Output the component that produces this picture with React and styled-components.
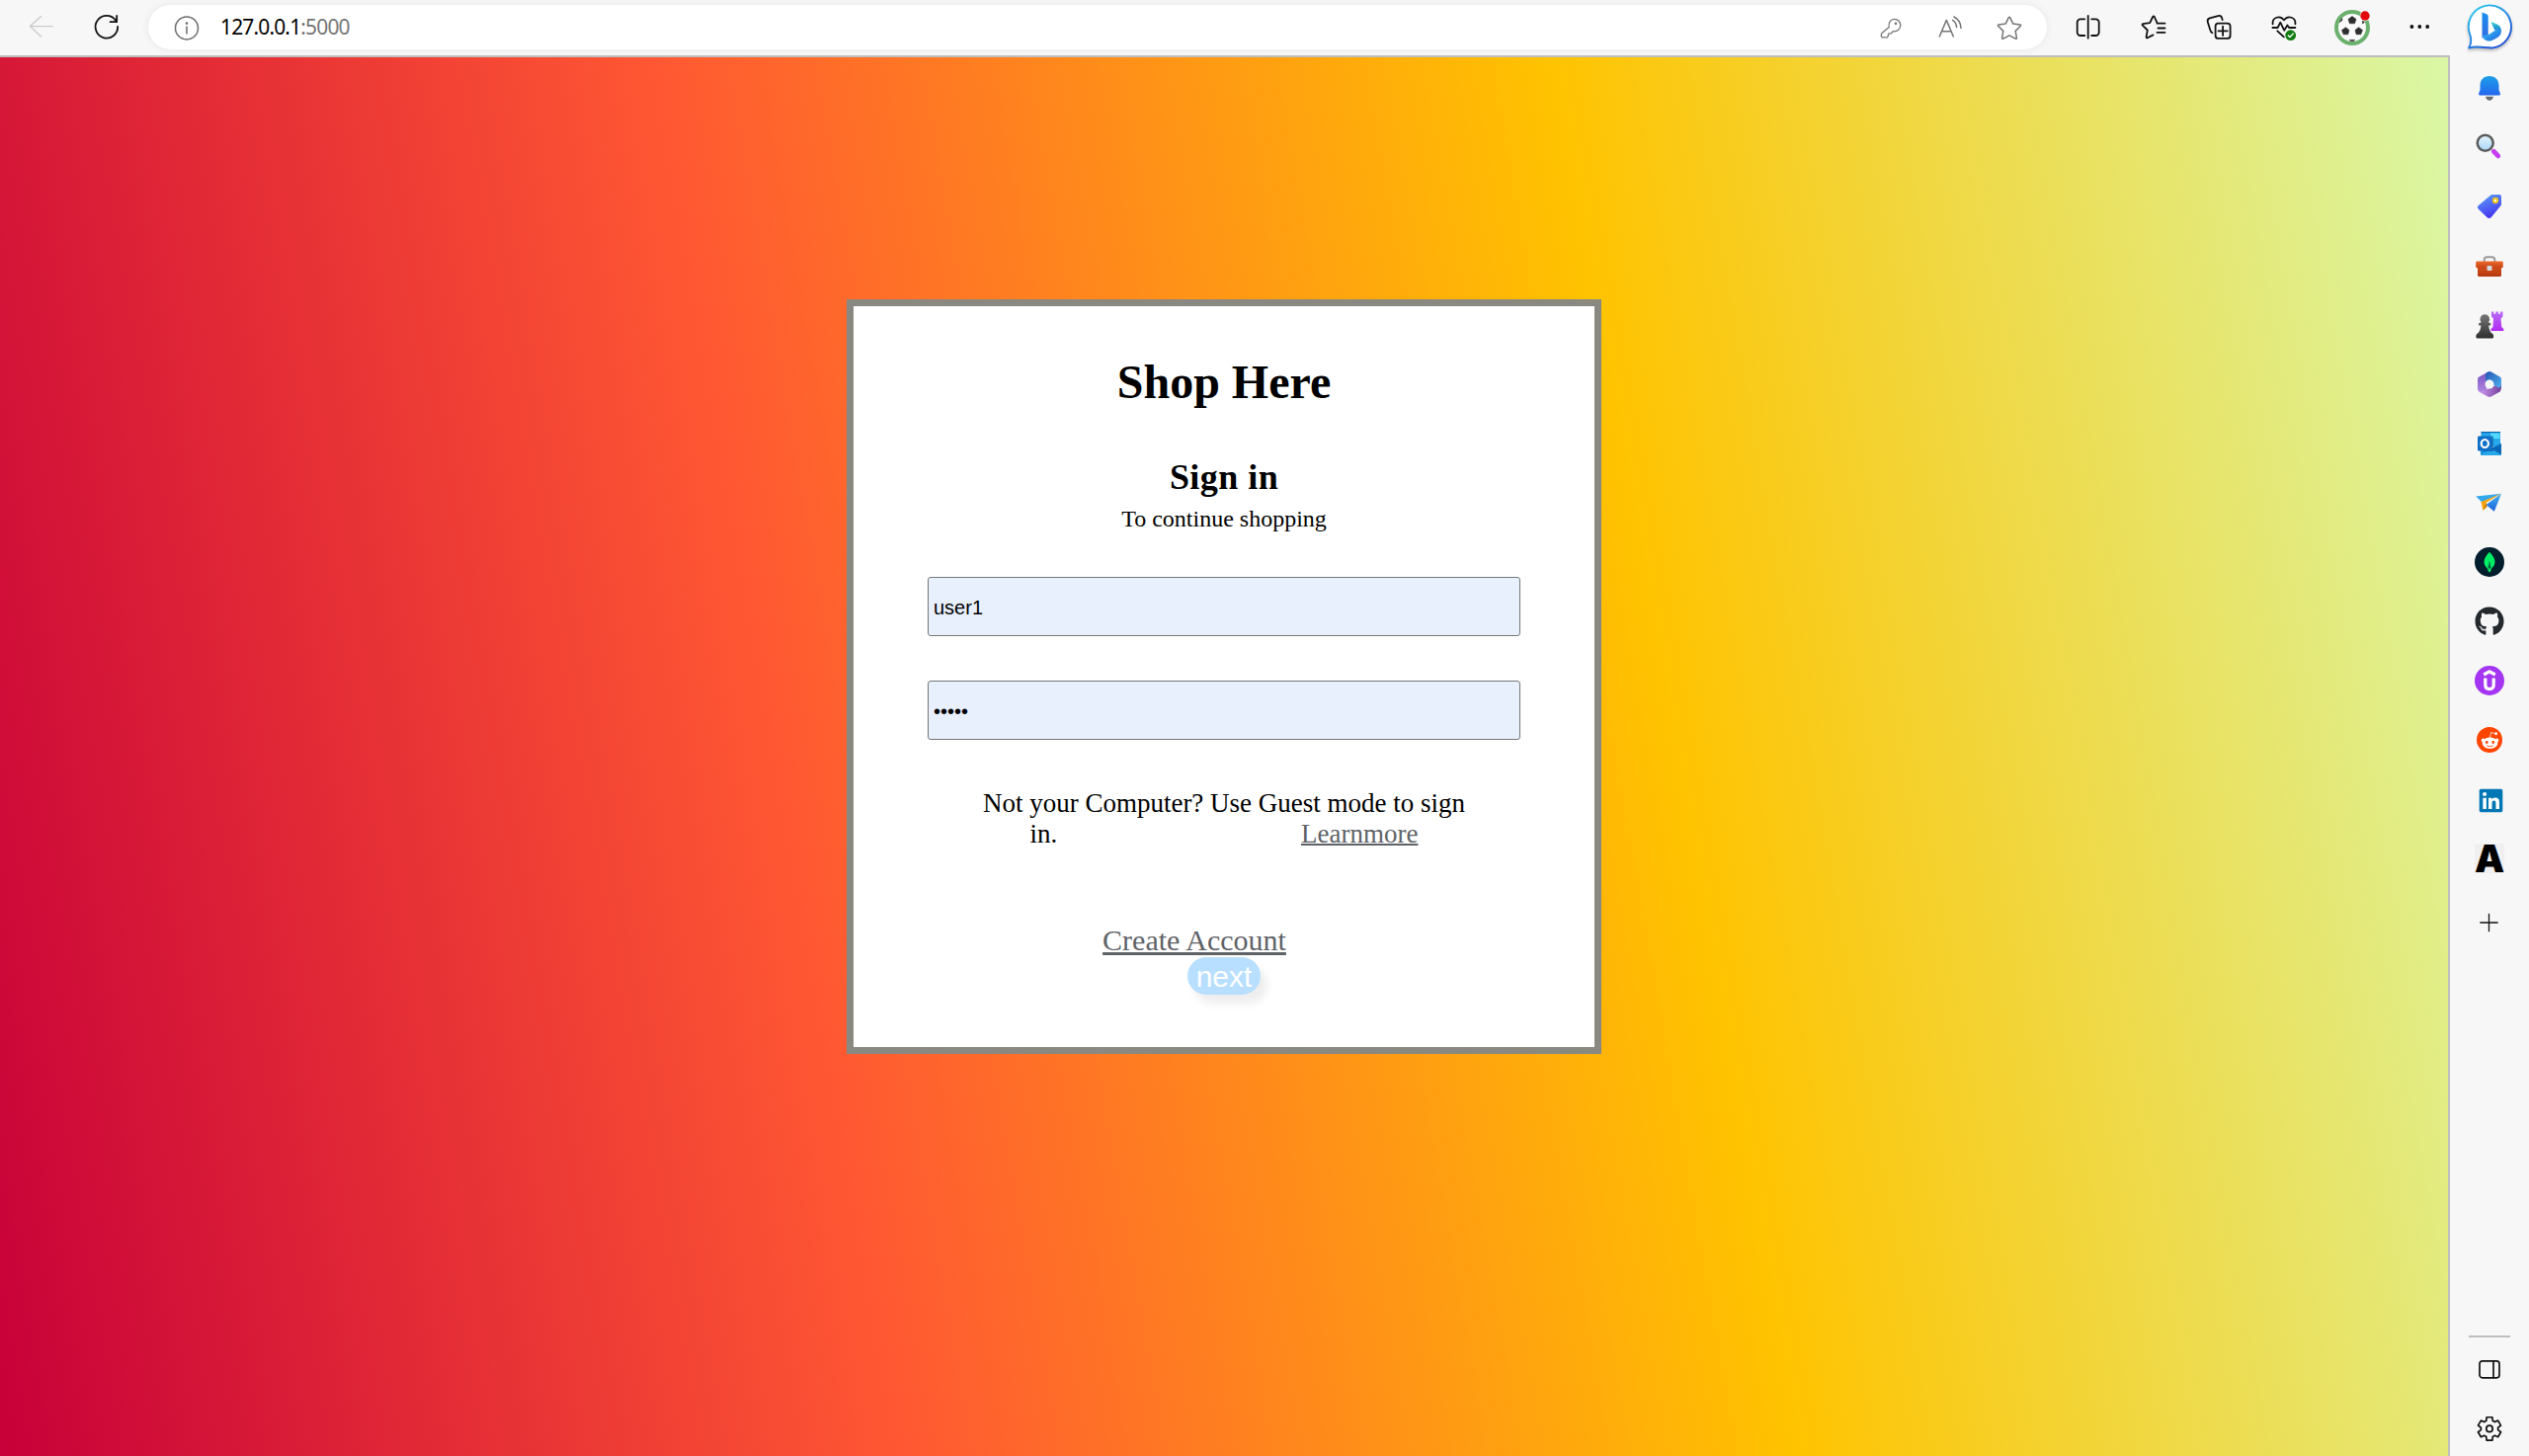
import React from "react";
import styled, { createGlobalStyle } from "styled-components";
import { FaGithub, FaRedditAlien, FaLinkedin } from "react-icons/fa";

const GlobalStyle = createGlobalStyle`
  * { box-sizing: border-box; }
  html, body { margin: 0; padding: 0; background: #f7f7f7; }
  body { overflow: hidden; }
`;

const Browser = styled.div`
  display: flex;
  flex-direction: column;
  width: 2560px;
  height: 1474px;
  background: #f7f7f7;
`;

const Toolbar = styled.header`
  display: flex;
  align-items: center;
  height: 56px;
  padding-left: 9px;
  flex: none;
`;

const Slot = styled.span`
  display: flex;
  align-items: center;
  justify-content: center;
  flex: none;
  width: ${(p) => p.$w || 60}px;
  height: ${(p) => p.$h || 54}px;
  color: ${(p) => p.$color || "#111"};
  svg { display: block; flex: none; }
`;

const ToolSlot = styled(Slot)`
  margin-bottom: 2px;
`;

const AddressBar = styled.div`
  display: flex;
  align-items: center;
  width: 1922px;
  height: 45px;
  margin: 0 9px 1px;
  padding-right: 8px;
  border-radius: 23px;
  background: #fff;
  box-shadow: 0 0 8px rgba(0, 0, 0, 0.07);
`;

const Url = styled.span`
  flex: 1;
  margin-left: -5px;
  font: 400 21px/45px "Noto Sans", "Open Sans", sans-serif;
  letter-spacing: -0.85px;
  color: #000;
`;

const Port = styled.span`
  color: #767676;
`;

const Body = styled.div`
  display: flex;
  flex: 1;
  min-height: 0;
`;

const Page = styled.main`
  display: flex;
  justify-content: center;
  align-items: flex-start;
  width: 2480px;
  padding-top: 245px;
  border-top: 2px solid #bebebe;
  border-right: 2px solid #bebebe;
  background: linear-gradient(80deg, #c70039, #ff5733, #ffc300, #daf7a6) padding-box;
`;

const Card = styled.form`
  display: flex;
  flex-direction: column;
  align-items: center;
  width: 764px;
  height: 764px;
  padding-top: 49px;
  border: 7px solid #8a8981;
  background: #fff;
  font-family: "Liberation Serif", "Times New Roman", serif;
  color: #000;
`;

const Title = styled.h1`
  margin: 0;
  font-size: 48px;
  line-height: 56px;
`;

const Subtitle = styled.h2`
  margin: 47px 0 0;
  font-size: 36px;
  line-height: 42px;
  letter-spacing: 0.45px;
`;

const Hint = styled.p`
  margin: 7px 0 0;
  font-size: 24px;
  line-height: 28px;
`;

const Field = styled.input`
  width: 600px;
  height: 60px;
  margin: 45px 0 0;
  padding: 4px 4px 1px 5px;
  border: 1px solid #767676;
  border-radius: 3px;
  outline: none;
  background: #e8f0fe;
  font: 20px "Liberation Sans", Arial, sans-serif;
  color: #000;
`;

const Notice = styled.p`
  display: flex;
  flex-direction: column;
  align-items: center;
  margin: 49px 0 0;
  font-size: 27px;
  line-height: 31px;
`;

const NoticeEnd = styled.span`
  display: flex;
  justify-content: space-between;
  width: 393px;
`;

const Link = styled.a`
  color: #5f6368;
  text-decoration: underline;
  text-decoration-thickness: 2px;
`;

const CreateLink = styled(Link)`
  margin: 75px 60px 0 0;
  font-size: 30px;
  line-height: 34px;
  text-decoration-thickness: 3px;
  text-underline-offset: 2px;
`;

const NextButton = styled.button`
  width: 74px;
  height: 38px;
  margin: 0;
  padding: 1px 0 0;
  border: 0;
  border-radius: 19px;
  background: #b8dfff;
  box-shadow: 7px 9px 9px rgba(0, 0, 0, 0.07);
  font: 30px/36px "Liberation Sans", Arial, sans-serif;
  color: #fff;
`;

const Sidebar = styled.aside`
  display: flex;
  flex-direction: column;
  align-items: center;
  width: 80px;
  padding-top: 3px;
`;

const Spacer = styled.div`
  flex: 1;
`;

const SideFooter = styled.div`
  display: flex;
  flex-direction: column;
  align-items: center;
  flex: none;
`;

const Divider = styled.div`
  width: 42px;
  height: 2px;
  margin-bottom: 2px;
  background: #bebebe;
`;

const LetterTile = styled.span`
  display: flex;
  align-items: center;
  justify-content: center;
  width: 30px;
  height: 30px;
  background: #f0f0f0;
  font: 900 38px/30px Inter, "Open Sans", sans-serif;
  color: #000;
`;

const Line = ({ children, w = 1.4, ...rest }) => (
  <svg width="30" height="30" viewBox="0 0 30 30" fill="none" stroke="currentColor" strokeWidth={w} strokeLinecap="round" strokeLinejoin="round" {...rest}>
    {children}
  </svg>
);

const Art = ({ children, s = 30 }) => (
  <svg width={s} height={s} viewBox={`${-s / 2} ${-s / 2} ${s} ${s}`}>{children}</svg>
);

const Grad = ({ id, from, to, x2 = 0, y2 = 1 }) => (
  <linearGradient id={id} x1="0" y1="0" x2={x2} y2={y2}>
    <stop offset="0" stopColor={from} />
    <stop offset="1" stopColor={to} />
  </linearGradient>
);

const BackIcon = () => (
  <Line><path d="M26.3 14.6H3.6M14.5 4.5L3.4 14.6 14.5 24.9" /></Line>
);
const RefreshIcon = () => (
  <Line w={1.8}><path d="M26.2 14.8A11.3 11.3 0 1 1 24.2 8.800M25.200 4v6.200h-6.600" /></Line>
);
const InfoIcon = () => (
  <Line w={1.5}>
    <circle cx="15" cy="15.4" r="11.5" />
    <path d="M15 13.9v7" />
    <circle cx="15" cy="10.6" r="0.6" fill="currentColor" />
  </Line>
);
const KeyIcon = () => (
  <Line w={1.3}>
    <path d="M13.2 14.6C12 10 15 6.4 18.6 6.4c3.6 0 6.2 2.8 6.2 6.2 0 3.8-3.4 6.8-7.6 6.1l-1.800 2.200h-2.200l-.8.9v1.500l-1.200 1.500H6.400c-.6 0-1-.4-1-1v-2c0-.5.2-.9.5-1.200z" />
    <circle cx="20" cy="10.8" r="0.7" fill="currentColor" />
  </Line>
);
const ReadAloudIcon = () => (
  <Line w={1.5}>
    <path d="M4.300 24L11.300 7.400 18.300 24M6.600 18.700h9.400M17.600 7.400c2.300 1.500 3.800 4 4 7.200M18.900 4c4.300 2.300 7 6.400 7.100 11.400" />
  </Line>
);
const StarIcon = () => (
  <Line w={1.5}>
    <path d="M14.2 4.9q.8-1.2 1.6 0l3 6.2 6.9 1q1.4.3.5 1.4l-5 4.9 1.2 6.9q.1 1.4-1.2.9L15 22.9l-6.2 3.3q-1.3.5-1.2-.9l1.2-6.9-5-4.9q-.9-1.1.5-1.4l6.9-1z" />
  </Line>
);
const SplitIcon = () => (
  <Line w={1.8}>
    <path d="M11.2 24H7a3.3 3.3 0 0 1-3.3-3.3V10.600A3.3 3.3 0 0 1 7 7.300h4.200M18.200 7.300h4.200a3.300 3.300 0 0 1 3.300 3.300v10.100a3.300 3.300 0 0 1-3.300 3.300h-4.200M14.700 4v22.700" />
  </Line>
);
const FavoritesIcon = () => (
  <Line w={1.8}>
    <path d="M18.3 10.600L15.800 5q-.8-1.300-1.600 0l-3 6.200-6.900 1q-1.300.3-.5 1.400l5 4.900-1.200 6.900q0 1.400 1.300.9L14.500 23.400M18.500 11.700H26.500M19.500 16.500h7M18.500 20.800h8" />
  </Line>
);
const CollectionsIcon = () => (
  <Line w={1.8}>
    <rect x="11.600" y="11.600" width="15" height="15.300" rx="3" />
    <path d="M19.100 14.700v9.200M14.500 19.300h9.200M8.400 21.200c-1.500-.6-1.900-2-2.300-3.500L3.800 10.200C3.200 8 4 6.900 5.800 6.300l8.500-2.200c2-.5 3.400.4 3.900 2.300l.5 1.700" />
  </Line>
);
const HealthIcon = () => (
  <Line w={1.8}>
    <path d="M3.600 12.400C2.800 5.500 11 2.900 15 8.300 19 2.900 27.200 5.500 26.400 12.400M3.400 16h5.200l2.700-5.300 3.900 8 3.200-5.200 1.700 2.500h6.300M8.300 19.300l6.500 6" />
    <circle cx="21.700" cy="23.700" r="5.400" fill="#107c10" stroke="none" />
    <path d="M19.300 24l1.700 1.600 3.200-3.500" stroke="#fff" strokeWidth="1.400" />
  </Line>
);
const AvatarIcon = () => (
  <Art s={38}>
    <circle r="16" fill="#fafafa" stroke="#6cb06e" strokeWidth="4" />
    <g fill="#2e2e2e" stroke="#2e2e2e" strokeWidth="0.600" strokeLinejoin="round">
      <path d="M0-11.500l4 3-1.500 4.300h-5L-4-8.500zM-6.500-.3l3.500 2.800-1.200 4.300h-4.600L-10.500 2.600zM6.500-.3L3 2.500l1.200 4.300h4.500l1.800-4.300zM-2.600 12.400h5.200l-1 1.200h-3.200zM-12.800-5.500l2.500-4 .3 2zM12.300-5.200l-1.800-2v3z" />
    </g>
    <circle cx="13" cy="-12" r="5.300" fill="#f7f7f7" />
    <circle cx="13" cy="-12" r="4.700" fill="#e30909" />
  </Art>
);
const MoreIcon = () => (
  <Art><g fill="#111"><circle cx="-7.600" r="1.900" /><circle cx=".300" r="1.900" /><circle cx="8.200" r="1.900" /></g></Art>
);
const BingIcon = () => (
  <Art s={54}>
    <defs>
      <Grad id="bubble" from="#2bd4ef" to="#1f4fd8" x2={0.7} />
      <Grad id="bStem" from="#1b8ff0" to="#2f6be0" />
      <Grad id="bBowl" from="#35d6d0" to="#1667d8" />
      <Grad id="bFoot" from="#35c8f5" to="#1f5fe0" x2={1} />
    </defs>
    <g transform="translate(-.500 -.500)">
      <path d="M-21.400 21C-18.800 17-18.800 12-20.200 7.500A21.600 21.600 0 1 1 3 20.900C-5 21.300-12 18.500-21.400 21z" fill="#fff" stroke="url(#bubble)" strokeWidth="1.900" strokeLinejoin="round" filter="drop-shadow(0 2px 1.500px rgba(0,0,0,.25))" />
      <path d="M-8-15l4.600 1.700q1.600.8 1.600 2.500V8.500L-8 11z" fill="url(#bStem)" />
      <path d="M1.800-5.200L8-2.600C11-1 12 2.200 11 5.600L4.500 2.400 1.400-4.300q-.2-.9.400-.9z" fill="url(#bBowl)" />
      <path d="M-8 8.300C-7.500 12-4 14.500 0 14c3.500-.7 8.500-3.800 10.500-6.300C12.300 5 10.500 1.800 7 2L-1.500 7.800z" fill="url(#bFoot)" />
    </g>
  </Art>
);

const BellIcon = () => (
  <Art>
    <defs><Grad id="bell" from="#1c9fe6" to="#2468f0" /></defs>
    <path d="M0-12C6-12 9.500-8 9.500-2.500V2l1.400 3.500q.4 1.900-1.200 1.900H-9.700q-1.600 0-1.200-1.900L-9.500 2v-4.500C-9.500-8-6-12 0-12z" fill="url(#bell)" />
    <path d="M-4 8.800h8Q3 12.700 0 12.700T-4 8.800z" fill="#686e73" />
  </Art>
);
const SearchIcon = () => (
  <Art>
    <defs><Grad id="lens" from="#e4f3fd" to="#a9d7f5" /></defs>
    <g transform="translate(0 -2)">
      <path d="M4.300 6.300l4.500 4.600" stroke="#c63df0" strokeWidth="4.800" strokeLinecap="round" />
      <circle cx="-4.300" cy="-2.300" r="8" fill="url(#lens)" stroke="#5b5b5b" strokeWidth="2.500" />
    </g>
  </Art>
);
const TagIcon = () => (
  <Art>
    <defs><Grad id="tag" from="#5aa5fa" to="#4638f0" x2={0.4} /></defs>
    <path d="M1-11.300Q1.700-12 2.800-12H10q2 0 2 2v7.500q0 1-.8 1.900L1.500 11.200q-2 1.600-3.800 0L-11.400 2.500Q-13 .8-11.400-.8z" fill="url(#tag)" />
    <circle cx="6" cy="-6" r="2.200" fill="#fff" stroke="#f3c314" strokeWidth="1.900" />
  </Art>
);
const BriefcaseIcon = () => (
  <Art>
    <defs><Grad id="lid" from="#ec6a2c" to="#c64317" /><Grad id="case" from="#d9501b" to="#b43a10" /></defs>
    <path d="M-5.300-4v-2q0-2.700 2.700-2.700h5.200Q5.300-8.700 5.300-6v2" fill="none" stroke="#9a9a9a" strokeWidth="1.900" />
    <path d="M-12 0H12V9.500q0 1.500-1.500 1.500H-10.500q-1.500 0-1.500-1.500z" fill="url(#case)" />
    <path d="M-12.500-4.500H12.500q1.300 0 1.300 1.300V.8q0 1.500-1.600 1.500H-12.200q-1.600 0-1.600-1.500v-4q0-1.300 1.300-1.300z" fill="url(#lid)" />
    <rect x="-2.500" y="0" width="5" height="5" rx="1" fill="#d5dadd" />
  </Art>
);
const GamesIcon = () => (
  <Art>
    <defs><Grad id="pawn" from="#777" to="#2e2e2e" /><Grad id="rook" from="#b86cf5" to="#b32bf3" /></defs>
    <path d="M2-13.500h2.300v2.200h2v-2.200h2.600v2.200h2v-2.200h2.600v5l-2 2 .8 8.500 2 2v2H1.500v-2l2-2L4-6.500 2-8.500z" fill="url(#rook)" />
    <path d="M-4.700-10.700a5 5 0 0 1 3.600 8.300l2.300.5v2.400H-.8c.3 4 1.500 6 3 7.800q1.900.5 1.900 2.500v1.400q0 1.400-1.400 1.400H-12.200q-1.400 0-1.400-1.400v-1.400q0-2 2-2.500c1.700-1.800 2.700-4 3-7.800h-2.200v-2.400l2.500-.5a5 5 0 0 1 3.600-8.300z" fill="url(#pawn)" />
  </Art>
);
const OfficeIcon = () => (
  <Art>
    <defs>
      <Grad id="o1" from="#7b55c4" to="#b78fe4" />
      <Grad id="o2" from="#2456b4" to="#4fb0f0" x2={1} />
      <Grad id="o3" from="#d59cf2" to="#6e3f9a" x2={1} y2={0} />
    </defs>
    <path d="M-3-11.600L-10.600-7.400Q-12-6.500-12-4.800V4.800Q-12 6.500-10.600 7.400L-5 10.500-2 3-3-4z" fill="url(#o1)" />
    <path d="M-11 7.200L-2.200 12.200Q0 13.600 2.200 12.200L10.600 7.400Q12.500 6 12-1.500L4 2 -3.500 5.500Q-7 8.500-11 7.200z" fill="url(#o3)" />
    <path d="M-2.200-12.200Q0-13.600 2.200-12.200L10.600-7.400Q12-6.500 12-4.800V1Q11 4.500 8 3L3 0 0-4.600-4-2.400V-9.500Q-4-11.500-2.200-12.200z" fill="url(#o2)" />
    <circle r="4.500" fill="#f7f7f7" />
  </Art>
);
const OutlookIcon = () => (
  <Art>
    <rect x="-8.500" y="-12" width="19.500" height="15" rx="1" fill="#28a8ea" />
    <path d="M1-11h9.500v6H1z" fill="#50d9ff" />
    <path d="M-8.500-12H11v1.200H-8.500z" fill="#0a5fae" />
    <path d="M-9 1l10 4L12 0v11q0 1-1 1H-8q-1 0-1-1z" fill="#1490df" />
    <path d="M12 0v11L2 5z" fill="#0a67b7" />
    <path d="M-9 11.500L2 5.500l9.500 6.500H-8z" fill="#28a8ea" />
    <path d="M1-7.500h1.500q1.300 0 1.300 1V8H-6z" fill="#064a8c" opacity=".6" />
    <rect x="-12" y="-7.500" width="14.500" height="15" rx="1.200" fill="#0f6fc6" />
    <ellipse cx="-4.700" cy="0" rx="3.600" ry="4" fill="none" stroke="#fff" strokeWidth="2.200" />
  </Art>
);
const PlaneIcon = () => (
  <Art>
    <defs><Grad id="wing" from="#3fb3f5" to="#1e62d8" /></defs>
    <path d="M-13.800-6.500L12-9.200-7.800-.8z" fill="#32a9ee" />
    <path d="M12-9.200L-8.500-1l1.800 8.700L-2.500 4-3-.5z" fill="#f6a511" />
    <path d="M-6.500 7.500L-2.500 3.500-4 1z" fill="#c97a06" />
    <path d="M12-9.200L4.800 8.800-3.500 2z" fill="url(#wing)" />
  </Art>
);
const MongoIcon = () => (
  <Art>
    <circle r="15" fill="#001e2b" />
    <path d="M0-10.200C3.500-6.500 5.500-3.500 5.500 0 5.500 3.500 3 5.500 1.800 6.800L1.400 9 0 10.500-1.400 9-1.800 6.800C-3 5.500-5.500 3.500-5.500 0-5.500-3.500-3.500-6.500 0-10.200z" fill="#00ed64" />
    <path d="M0-1.500L1.500 5.500 0 7.500-1.500 5.500z" fill="#046a45" />
  </Art>
);
const UdemyIcon = () => (
  <Art>
    <circle r="15" fill="#a435f0" />
    <path d="M-5.800-6L0-9.200l5.800 3.200M-4.200-2.500V4q0 4.600 4.200 4.600T4.200 4v-6.500" fill="none" stroke="#fff" strokeWidth="3.300" />
  </Art>
);

const RedditBadge = styled.span`
  display: grid;
  place-items: center;
  width: 26px;
  height: 26px;
  border-radius: 50%;
  background: #ff4500;
  color: #fff;
`;

const LinkedInBadge = styled.span`
  display: grid;
  place-items: center;
  width: 24px;
  height: 24px;
  margin: 0 1px 1px 0;
  border-radius: 2px;
  background: linear-gradient(#fff, #fff) center / 20px 20px no-repeat;
  color: #0077b5;
`;

const PlusIcon = () => (
  <Line w={1.3}><path d="M14.500 6.300v17.400M5.800 15h17.400" /></Line>
);
const PanelIcon = () => (
  <Line w={1.700}><rect x="5" y="6.800" width="20" height="17" rx="2.700" /><path d="M19 7v16.600" /></Line>
);

const polar = (deg, r) => {
  const a = (deg * Math.PI) / 180;
  return `${(15 + r * Math.cos(a)).toFixed(2)} ${(16.4 + r * Math.sin(a)).toFixed(2)}`;
};
const gearPath =
  "M" +
  [0, 1, 2, 3, 4, 5]
    .flatMap((k) => {
      const a = k * 60 - 90;
      return [polar(a - 22, 8.7), polar(a - 14, 12), polar(a + 14, 12), polar(a + 22, 8.7)];
    })
    .join("L") +
  "Z";
const GearIcon = () => (
  <Line w={1.7}><path d={gearPath} /><circle cx="15" cy="16.4" r="3.2" /></Line>
);

const sideItems = [
  <BellIcon />, <SearchIcon />, <TagIcon />, <BriefcaseIcon />, <GamesIcon />, <OfficeIcon />,
  <OutlookIcon />, <PlaneIcon />, <MongoIcon />,
  <FaGithub size={30} color="#24292e" />,
  <UdemyIcon />,
  <RedditBadge><FaRedditAlien size={19} /></RedditBadge>,
  <LinkedInBadge><FaLinkedin size={27} /></LinkedInBadge>,
  <LetterTile>A</LetterTile>,
];

export default function App() {
  return (
    <Browser>
      <GlobalStyle />
      <Toolbar>
        <ToolSlot $w={66} $color="#cbcbcb"><BackIcon /></ToolSlot>
        <ToolSlot $w={66}><RefreshIcon /></ToolSlot>
        <AddressBar>
          <Slot $w={78} $h={45} $color="#6b6b6b"><InfoIcon /></Slot>
          <Url>127.0.0.1<Port>:5000</Port></Url>
          <Slot $h={45} $color="#767676"><KeyIcon /></Slot>
          <Slot $h={45} $color="#767676"><ReadAloudIcon /></Slot>
          <Slot $h={45} $color="#767676"><StarIcon /></Slot>
        </AddressBar>
        <ToolSlot $w={66}><SplitIcon /></ToolSlot>
        <ToolSlot $w={66}><FavoritesIcon /></ToolSlot>
        <ToolSlot $w={66}><CollectionsIcon /></ToolSlot>
        <ToolSlot $w={66}><HealthIcon /></ToolSlot>
        <Slot $w={72}><AvatarIcon /></Slot>
        <ToolSlot $w={64}><MoreIcon /></ToolSlot>
        <Slot $w={79}><BingIcon /></Slot>
      </Toolbar>
      <Body>
        <Page>
          <Card>
            <Title>Shop Here</Title>
            <Subtitle>Sign in</Subtitle>
            <Hint>To continue shopping</Hint>
            <Field type="text" defaultValue="user1" />
            <Field type="password" defaultValue="user1" />
            <Notice>
              <span>Not your Computer? Use Guest mode to sign</span>
              <NoticeEnd><span>in.</span><Link>Learnmore</Link></NoticeEnd>
            </Notice>
            <CreateLink>Create Account</CreateLink>
            <NextButton type="button">next</NextButton>
          </Card>
        </Page>
        <Sidebar>
          {sideItems.map((icon, i) => (
            <Slot key={i} $h={60}>{icon}</Slot>
          ))}
          <Slot $h={70}><PlusIcon /></Slot>
          <Spacer />
          <SideFooter>
            <Divider />
            <Slot $h={60}><PanelIcon /></Slot>
            <Slot $h={58}><GearIcon /></Slot>
          </SideFooter>
        </Sidebar>
      </Body>
    </Browser>
  );
}
